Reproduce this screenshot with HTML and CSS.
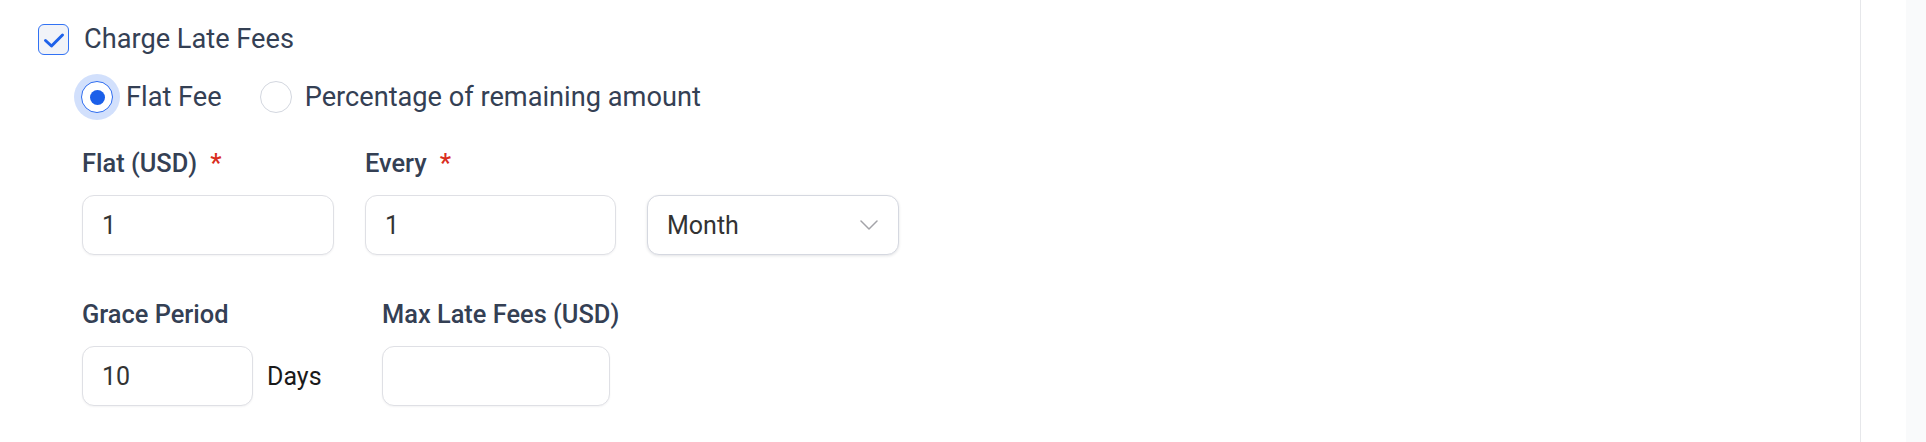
FILE: index.html
```html
<!DOCTYPE html>
<html lang="en">
<head>
<meta charset="utf-8">
<title>Charge Late Fees</title>
<link rel="stylesheet" href="styles.css">
</head>
<body>
<div class="page">
  <main class="content">
    <label class="check-row">
      <span class="checkbox">
        <svg width="31" height="31" viewBox="0 0 31 31"><path d="M7.5 16.5 L13.5 22 L24.5 11" fill="none" stroke="#1f62ea" stroke-width="3" stroke-linecap="round" stroke-linejoin="round"/></svg>
      </span>
      <span class="check-label">Charge Late Fees</span>
    </label>

    <div class="radio-row">
      <label class="radio-opt">
        <span class="radio checked"><span class="dot"></span></span>
        <span class="radio-label">Flat Fee</span>
      </label>
      <label class="radio-opt">
        <span class="radio"></span>
        <span class="radio-label">Percentage of remaining amount</span>
      </label>
    </div>

    <div class="fields">
      <div class="field-row">
        <div class="field col-a">
          <div class="label">Flat (USD)<span class="req">*</span></div>
          <div class="input">1</div>
        </div>
        <div class="field col-b">
          <div class="label">Every<span class="req">*</span></div>
          <div class="input">1</div>
        </div>
        <div class="field col-a">
          <div class="label">&nbsp;</div>
          <div class="input select">
            <span>Month</span>
            <svg class="chev" width="18" height="10" viewBox="0 0 18 10"><path d="M1 1 L9 9 L17 1" fill="none" stroke="#a3a3a8" stroke-width="1.5" stroke-linecap="round" stroke-linejoin="round"/></svg>
          </div>
        </div>
      </div>

      <div class="field-row row-two">
        <div class="field col-grace">
          <div class="label">Grace Period</div>
          <div class="inline">
            <div class="input short">10</div>
            <span class="unit">Days</span>
          </div>
        </div>
        <div class="field col-max">
          <div class="label">Max Late Fees (USD)</div>
          <div class="input"></div>
        </div>
      </div>
    </div>
  </main>
  <div class="gutter"></div>
  <div class="strip"></div>
</div>
</body>
</html>
```

FILE: styles.css
```css
html, body {
  margin: 0;
  padding: 0;
  background: #ffffff;
}

body {
  font-family: Roboto, "Liberation Sans", Arial, sans-serif;
  color: #344054;
}

.page {
  display: flex;
  height: 442px;
}

.content {
  flex: 1;
  border-right: 1px solid #e6e7ea;
  padding: 24px 0 0 38px;
  box-sizing: border-box;
}

.gutter {
  width: 45px;
}

.strip {
  width: 20px;
  background: #f9fafb;
}

/* checkbox */
.check-row {
  display: flex;
  align-items: center;
  gap: 15px;
  height: 31px;
}

.checkbox {
  width: 31px;
  height: 31px;
  box-sizing: border-box;
  border: 1px solid #3172f4;
  border-radius: 6px;
  background: #f1f3f8;
  display: flex;
  align-items: center;
  justify-content: center;
}

.checkbox svg {
  display: block;
  margin: -1px;
}

.check-label {
  font-size: 27.2px;
  line-height: 31px;
  color: #344054;
}

/* radios */
.radio-row {
  display: flex;
  align-items: center;
  gap: 38px;
  margin: 26px 0 0 43px;
  height: 32px;
}

.radio-opt {
  display: flex;
  align-items: center;
  gap: 13px;
}

.radio {
  width: 32px;
  height: 32px;
  box-sizing: border-box;
  border-radius: 50%;
  border: 1px solid #d3d7df;
  background: #fff;
  display: flex;
  align-items: center;
  justify-content: center;
}

.radio.checked {
  border-color: #2d6cf0;
  box-shadow: 0 0 0 7px #d2e0fc;
}

.radio .dot {
  width: 15px;
  height: 15px;
  border-radius: 50%;
  background: #1b5fe9;
}

.radio-label {
  font-size: 27.2px;
  line-height: 32px;
  color: #344054;
}

/* fields */
.fields {
  margin: 32px 0 0 44px;
}

.field-row {
  display: flex;
  gap: 31px;
}

.row-two {
  margin-top: 41px;
}

.col-a { width: 252px; }
.col-b { width: 251px; }
.col-grace { width: 269px; }
.col-max { width: 228px; }

.label {
  font-size: 25.4px;
  font-weight: 500;
  line-height: 36px;
  height: 36px;
  margin-bottom: 14px;
  color: #344054;
  white-space: nowrap;
}

.req {
  color: #d92d20;
  margin-left: 13px;
}

.input {
  height: 60px;
  box-sizing: border-box;
  border: 1px solid #dfe0e5;
  border-radius: 12px;
  background: #fff;
  box-shadow: 0 1px 2px rgba(16, 24, 40, 0.05);
  padding: 0 19px;
  display: flex;
  align-items: center;
  font-size: 25px;
  color: #333333;
}

.select {
  justify-content: space-between;
  border-color: #d5d8e0;
  box-shadow: 0 1px 3px rgba(16, 24, 40, 0.12);
  padding-right: 20px;
}

.chev {
  display: block;
}

.inline {
  display: flex;
  align-items: center;
  gap: 14px;
}

.input.short {
  width: 171px;
}

.unit {
  font-size: 25px;
  color: #1a1a1a;
}
```
